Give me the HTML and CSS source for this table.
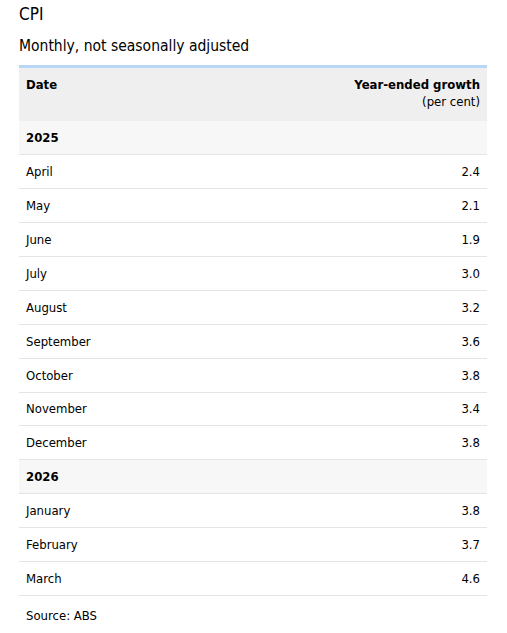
FILE: index.html
```html
<!DOCTYPE html>
<html lang="en">
<head>
  <meta charset="UTF-8" />
  <title>CPI</title>
  <link rel="stylesheet" href="styles.css">
</head>
<body>
  <div class="cpi-box">
    <h2 class="cpi-title">CPI</h2>
    <p class="cpi-sub">Monthly, not seasonally adjusted</p>
    <table class="cpi-table">
      <thead>
        <tr>
          <th>Date</th>
          <th class="num">Year-ended growth<span class="unit">(per cent)</span></th>
        </tr>
      </thead>
      <tbody>
        <tr class="year"><td>2025</td><td></td></tr>
        <tr><td>April</td><td class="num">2.4</td></tr>
        <tr><td>May</td><td class="num">2.1</td></tr>
        <tr><td>June</td><td class="num">1.9</td></tr>
        <tr><td>July</td><td class="num">3.0</td></tr>
        <tr><td>August</td><td class="num">3.2</td></tr>
        <tr><td>September</td><td class="num">3.6</td></tr>
        <tr><td>October</td><td class="num">3.8</td></tr>
        <tr><td>November</td><td class="num">3.4</td></tr>
        <tr><td>December</td><td class="num">3.8</td></tr>
        <tr class="year"><td>2026</td><td></td></tr>
        <tr><td>January</td><td class="num">3.8</td></tr>
        <tr><td>February</td><td class="num">3.7</td></tr>
        <tr><td>March</td><td class="num">4.6</td></tr>
      </tbody>
    </table>
    <p class="source">Source: ABS</p>
  </div>
</body>
</html>
```

FILE: styles.css
```css
* { box-sizing: border-box; }
body {
  margin: 0;
  padding: 0;
  background: #fff;
  color: #000;
  font-family: 'DejaVu Sans Condensed', 'DejaVu Sans', sans-serif;
}
.cpi-box {
  padding: 0 20px 0 19px;
}
.cpi-title {
  margin: 0;
  padding-top: 3px;
  font-size: 17px;
  font-weight: normal;
  line-height: 22px;
}
.cpi-sub {
  margin: 10px 0 0;
  font-size: 15.5px;
  line-height: 22px;
}
.cpi-table {
  margin-top: 8px;
  width: 100%;
  border-collapse: collapse;
  font-size: 13px;
}
.cpi-table thead tr {
  background: #efefef;
  border-top: 3px solid #b8d6f5;
}
.cpi-table th {
  height: 54px;
  padding: 8px 7px 0;
  vertical-align: top;
  text-align: left;
  line-height: 17px;
}
.cpi-table th.num { text-align: right; }
.unit {
  display: block;
  font-weight: normal;
}
.cpi-table td {
  height: 33.95px;
  padding: 0 7px;
  border-bottom: 1px solid #e4e4e4;
}
.cpi-table td.num { text-align: right; }
.year td {
  background: #f7f7f7;
  font-weight: bold;
}
.source {
  margin: 0;
  padding: 12px 7px;
  font-size: 13px;
}
```
